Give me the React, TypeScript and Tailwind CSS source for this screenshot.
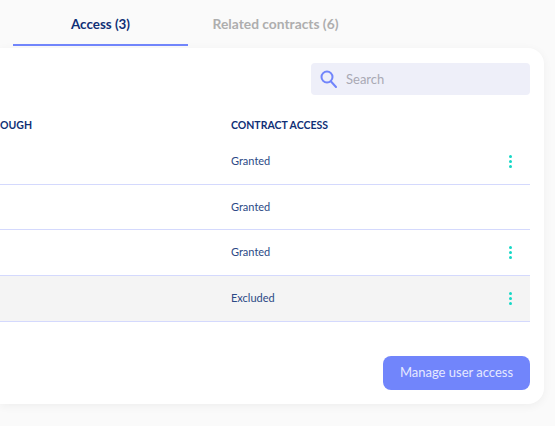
const font = { fontFamily: 'Lato, sans-serif' };

const rows = [
  { access: "Granted", menu: true, selected: false },
  { access: "Granted", menu: false, selected: false },
  { access: "Granted", menu: true, selected: false },
  { access: "Excluded", menu: true, selected: true },
];

const Dots = () => (
  <div className="flex flex-col gap-[2px]">
    <span className="w-[3px] h-[3px] rounded-full bg-[#14d8c6]" />
    <span className="w-[3px] h-[3px] rounded-full bg-[#14d8c6]" />
    <span className="w-[3px] h-[3px] rounded-full bg-[#14d8c6]" />
  </div>
);

export default function App() {
  return (
    <div style={font} className="w-[555px] h-[426px] overflow-hidden bg-[#fafafa]">
      <div className="flex h-[46px] pl-[13px]">
        <div className="w-[175px] pt-[15px] text-center text-[13.4px] leading-[18px] font-bold text-[#0f2f76] border-b-[2px] border-[#7185fb]">
          Access (3)
        </div>
        <div className="w-[175px] pt-[15px] text-center text-[13.8px] leading-[18px] font-bold text-[#aeaeae]">
          Related contracts (6)
        </div>
      </div>

      <div className="mt-[2px] w-[544px] h-[356px] bg-white rounded-r-[16px] shadow-[0_2px_10px_rgba(0,0,0,0.05)] pr-[14px] pt-[15px]">
        <div className="flex justify-end">
          <div className="w-[219px] h-[32px] rounded-[4px] bg-[#eeeff9] flex items-center pl-[9px] gap-[9px]">
            <svg width="17" height="18" viewBox="0 0 17 18" fill="none" stroke="#7185fb" strokeWidth="2">
              <circle cx="7" cy="7" r="5.5" />
              <path d="M11 11.5L16 17" strokeLinecap="round" />
            </svg>
            <span className="text-[13px] leading-[16px] pb-[1px] text-[#a9a9b4]">Search</span>
          </div>
        </div>

        <div className="flex h-[33px] mt-[11px] pt-[12px] text-[10.5px] leading-[14px] font-bold text-[#0f2f76]">
          <div className="w-[231px]">OUGH</div>
          <div>CONTRACT ACCESS</div>
        </div>

        <div className="flex flex-col">
          {rows.map((row, i) => (
            <div
              key={i}
              className={`flex items-center h-[45.7px] border-b border-[#d4d9fd] ${row.selected ? "bg-[#f4f4f4]" : ""}`}
            >
              <div className="w-[231px]" />
              <div className="text-[11px] text-[#2c4a86]">{row.access}</div>
              <div className="ml-auto mr-[18px]">{row.menu && <Dots />}</div>
            </div>
          ))}
        </div>

        <div className="flex justify-end mt-[34px]">
          <button className="w-[147px] h-[34px] rounded-[8px] bg-[#7185fb] text-[13px] text-[#e6e9ff]">
            Manage user access
          </button>
        </div>
      </div>
    </div>
  );
}
